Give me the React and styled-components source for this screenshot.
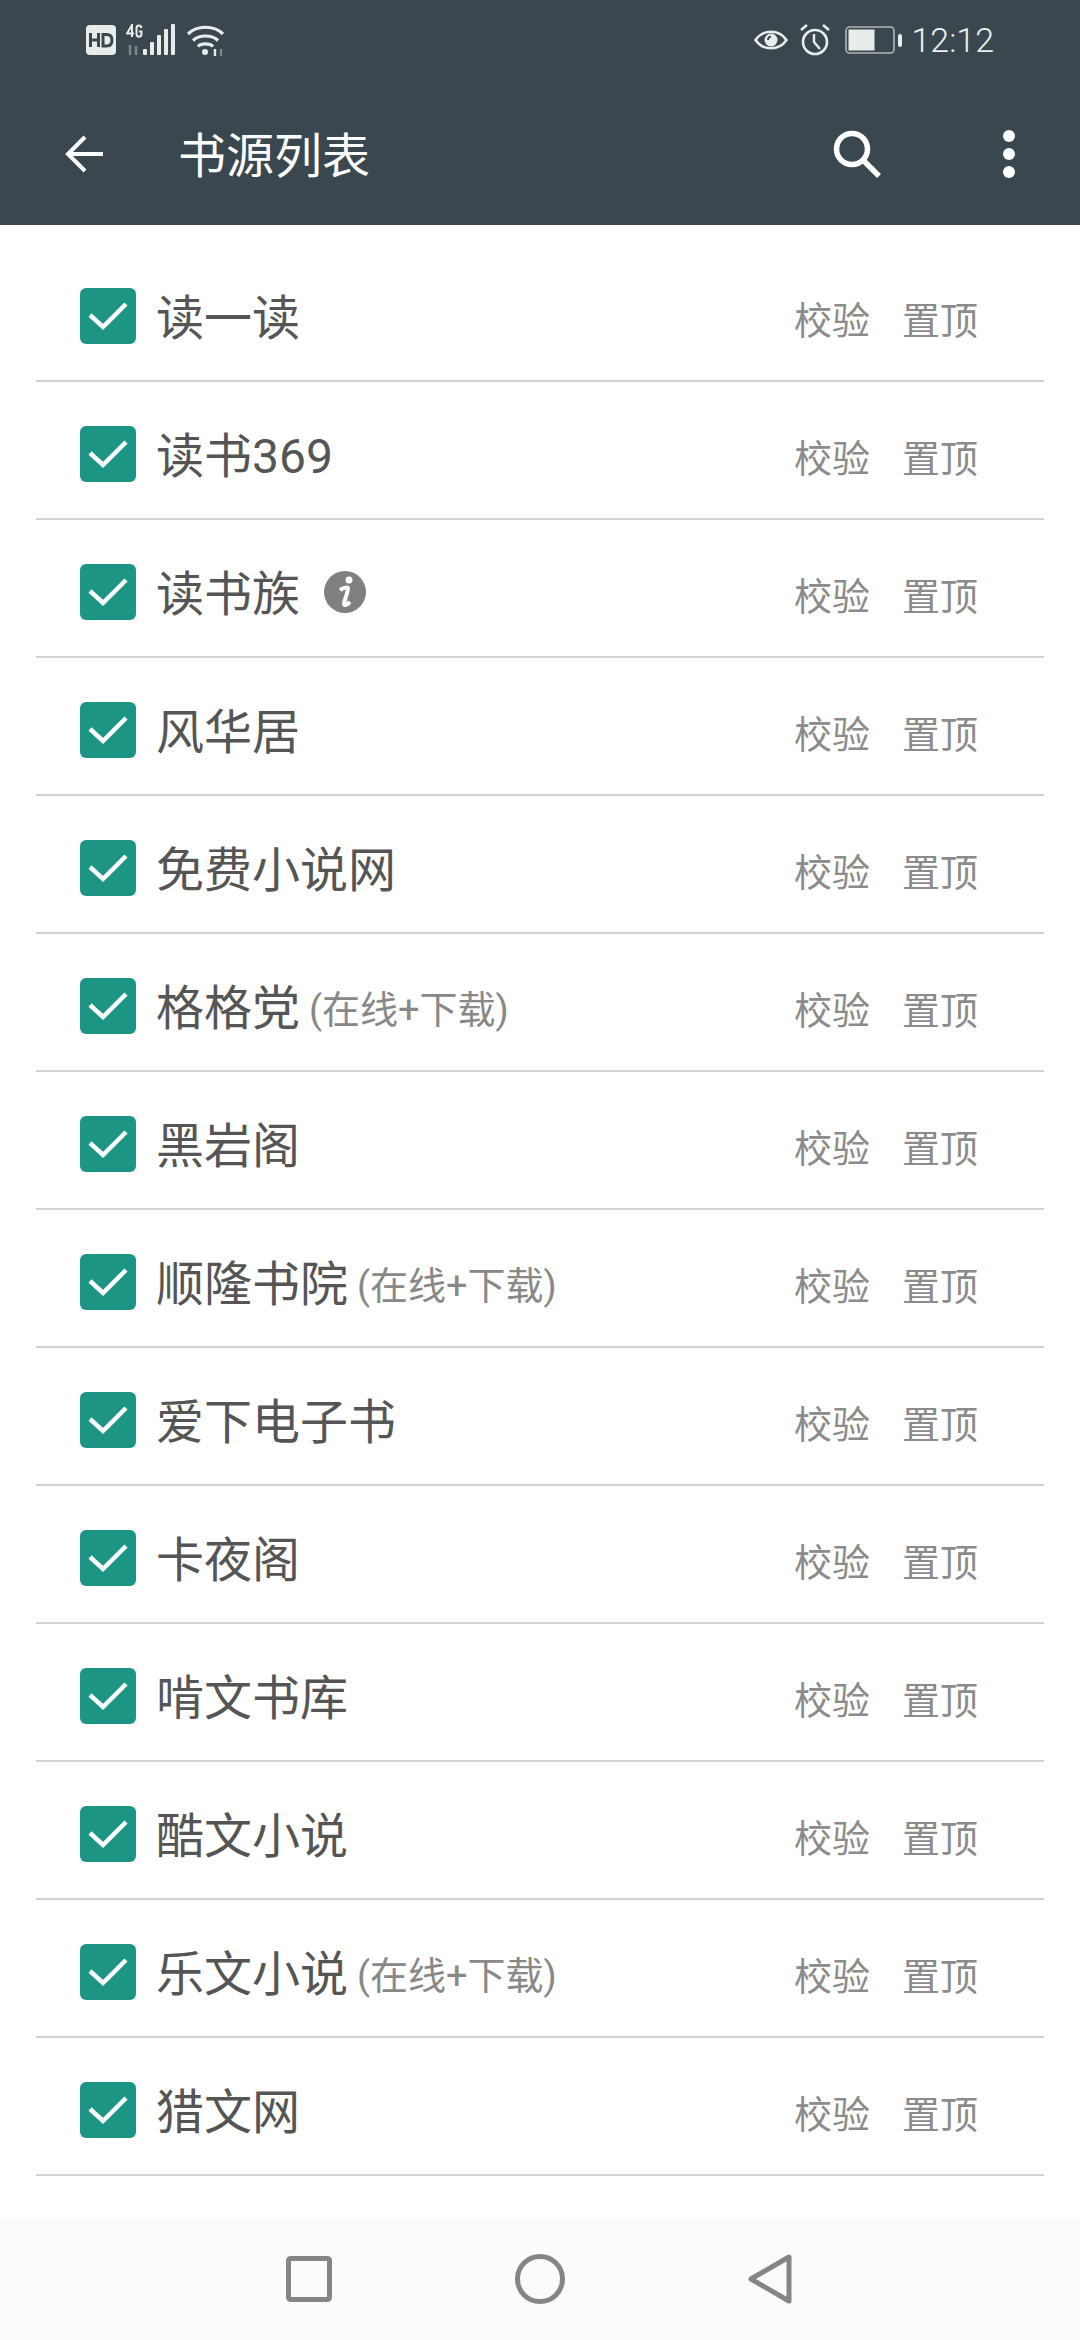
import React from "react";
import styled, { createGlobalStyle } from "styled-components";

const Global = createGlobalStyle`
  html, body { margin: 0; padding: 0; background: #fff; }
  body { font-family: "Roboto", "Noto Sans CJK SC", sans-serif; }
`;

const Page = styled.div`
  width: 1080px;
  height: 2340px;
  display: flex;
  flex-direction: column;
  overflow: hidden;
  background: #fff;
`;

const Header = styled.header`
  height: 225px;
  background: #3a474e;
  color: #fff;
  display: flex;
  flex-direction: column;
`;

const StatusBar = styled.div`
  height: 80px;
  padding: 0 86px 0 86px;
  display: flex;
  align-items: center;
  justify-content: space-between;
  color: #e8edec;
`;

const StatusGroup = styled.div`
  display: flex;
  align-items: center;
  gap: ${(p) => p.$gap}px;
`;

const BatterySlot = styled.span`
  display: flex;
  margin: 0 -3px 0 3px;
`;

const Clock = styled.span`
  font: 300 34px "Roboto", sans-serif;
  color: #eef1f1;
`;

const Toolbar = styled.div`
  flex: 1;
  display: flex;
  align-items: center;
  padding: 3px 65px 0 64px;
`;

const Title = styled.h1`
  flex: 1;
  margin: 0 0 5px 74px;
  font: 400 48px "Roboto", "Noto Sans CJK SC", sans-serif;
  color: #fff;
`;

const ToolIcons = styled.div`
  display: flex;
  align-items: center;
  gap: 122px;
`;

const List = styled.ul`
  flex: 1;
  list-style: none;
  margin: 0;
  padding: 19px 36px 0;
`;

const Row = styled.li`
  height: 138px;
  box-sizing: border-box;
  border-bottom: 2px solid #d2d2d2;
  padding: 8px 66px 0 44px;
  display: flex;
  align-items: center;
`;

const Check = styled.span`
  width: 56px;
  height: 56px;
  border-radius: 6px;
  background: #1c9585;
  display: flex;
  align-items: center;
  justify-content: center;
  flex: none;
`;

const Name = styled.span`
  margin-left: 20px;
  margin-bottom: 5px;
  font: 400 48px "Roboto", "Noto Sans CJK SC", sans-serif;
  color: #555;
  white-space: nowrap;
`;

const Note = styled.span`
  margin-left: 9px;
  font: 400 38px "Roboto", "Noto Sans CJK SC", sans-serif;
  color: #888;
  white-space: nowrap;
`;

const InfoBadge = styled.span`
  display: flex;
  margin-left: 24px;
`;

const Actions = styled.div`
  margin-left: auto;
  margin-top: 2px;
  display: flex;
  gap: 32px;
`;

const Action = styled.span`
  font: 400 38px "Roboto", "Noto Sans CJK SC", sans-serif;
  color: #8b8b8b;
`;

const NavBar = styled.nav`
  height: 122px;
  background: #fbfbfb;
  display: flex;
  align-items: center;
  gap: 183px;
  padding: 0 0 0 286px;
`;

const sources = [
  { name: "读一读" },
  { name: "读书369" },
  { name: "读书族", info: true },
  { name: "风华居" },
  { name: "免费小说网" },
  { name: "格格党", note: "(在线+下载)" },
  { name: "黑岩阁" },
  { name: "顺隆书院", note: "(在线+下载)" },
  { name: "爱下电子书" },
  { name: "卡夜阁" },
  { name: "啃文书库" },
  { name: "酷文小说" },
  { name: "乐文小说", note: "(在线+下载)" },
  { name: "猎文网" },
];

const HdIcon = () => (
  <svg width="30" height="30" viewBox="0 0 30 30">
    <rect width="30" height="30" rx="4" fill="#e8edec" />
    <path d="M4.500 8v14M12.500 8v14M4.500 15h8M17 9.500v11.500h3.500c3.500 0 5.500-2 5.500-5.750s-2-5.750-5.500-5.750z" fill="none" stroke="#3a474e" strokeWidth="3" />
  </svg>
);

const SignalIcon = () => (
  <svg width="50" height="32" viewBox="0 0 50 32">
    <path d="M6 13V1L1 9.500H8" fill="none" stroke="#e8edec" strokeWidth="2" />
    <path d="M15.500 4C15 0.500 10.500 0.500 10.500 4v6c0 3.500 5 3.500 5 0V7.500h-2.500" fill="none" stroke="#e8edec" strokeWidth="2" />
    <path d="M4 21v10M10 22v9" stroke="#7c878b" strokeWidth="2.500" />
    <rect x="17" y="25" width="4" height="6" rx="1" fill="#e8edec" />
    <rect x="24" y="18" width="4" height="13" rx="1" fill="#e8edec" />
    <rect x="31" y="11" width="4" height="20" rx="1" fill="#e8edec" />
    <rect x="38" y="5" width="4" height="26" rx="1" fill="#e8edec" />
    <rect x="45" y="0" width="4" height="31" rx="1" fill="#e8edec" />
  </svg>
);

const WifiIcon = () => (
  <svg width="39" height="32" viewBox="0 0 39 32" fill="none">
    <path d="M2 10C11 1 28 1 37 10" stroke="#e8edec" strokeWidth="3.200" />
    <path d="M7 16.500C13 10.500 26 10.500 32 16.500" stroke="#e8edec" strokeWidth="3.200" />
    <path d="M12 22.500C15 19 24 19 27 22.500" stroke="#e8edec" strokeWidth="3.200" />
    <circle cx="19" cy="28" r="3" fill="#e8edec" />
    <path d="M29 25v7" stroke="#e8edec" strokeWidth="2.400" />
    <path d="M35 25v7" stroke="#7c878b" strokeWidth="2.400" />
  </svg>
);

const EyeIcon = () => (
  <svg width="34" height="26" viewBox="0 0 34 26" fill="none">
    <path d="M1.500 13C9 2 25 2 32.500 13C25 24 9 24 1.500 13Z" stroke="#e8edec" strokeWidth="2.500" />
    <circle cx="17" cy="13" r="6.500" fill="#e8edec" />
    <path d="M14 13a3.500 3.500 0 0 1 3-3.500" stroke="#3a474e" strokeWidth="1.800" />
  </svg>
);

const AlarmIcon = () => (
  <svg width="32" height="32" viewBox="0 0 32 32" fill="none" stroke="#e8edec">
    <circle cx="16" cy="18" r="12" strokeWidth="2.600" />
    <path d="M15 10v8l6 7" strokeWidth="2.400" />
    <path d="M2 6l6-5M30 6l-6-5" strokeWidth="2.600" />
  </svg>
);

const BatteryIcon = () => (
  <svg width="58" height="30" viewBox="0 0 58 30" fill="none">
    <rect x="1" y="2" width="48" height="26" rx="3.500" stroke="#aeb7b8" strokeWidth="1.600" />
    <rect x="3.500" y="4.500" width="26" height="21" fill="#e8edec" />
    <rect x="53" y="9" width="4" height="13" rx="2" fill="#e8edec" />
  </svg>
);

const BackIcon = () => (
  <svg width="40" height="40" viewBox="0 0 40 40" fill="none" stroke="#fff" strokeWidth="4">
    <path d="M39 20H4M21 3 4 20l17 17" />
  </svg>
);

const SearchIcon = () => (
  <svg width="48" height="48" viewBox="0 0 48 48" fill="none" stroke="#fff" strokeWidth="5.500">
    <circle cx="19" cy="19" r="15.500" />
    <path d="M30 30l16 16" />
  </svg>
);

const MoreIcon = () => (
  <svg width="12" height="48" viewBox="0 0 12 48" fill="#fff">
    <circle cx="6" cy="6" r="6" />
    <circle cx="6" cy="24" r="6" />
    <circle cx="6" cy="42" r="6" />
  </svg>
);

const CheckMark = () => (
  <svg width="40" height="30" viewBox="0 0 40 30" fill="none" stroke="#fff" strokeWidth="4.500">
    <path d="M2 14l13 12L38 3" />
  </svg>
);

const InfoIcon = () => (
  <svg width="42" height="42" viewBox="0 0 42 42">
    <circle cx="21" cy="21" r="21" fill="#808080" />
    <circle cx="25" cy="9" r="3.500" fill="#fff" />
    <path d="M16 19c3-2 7-3 8-2s-4 13-4 16c0 2 3 1 6-2" fill="none" stroke="#fff" strokeWidth="4" />
  </svg>
);

const SquareIcon = () => (
  <svg width="46" height="46" viewBox="0 0 46 46" fill="none" stroke="#858585" strokeWidth="5">
    <rect x="2.500" y="2.500" width="41" height="41" rx="2" />
  </svg>
);

const CircleIcon = () => (
  <svg width="50" height="50" viewBox="0 0 50 50" fill="none" stroke="#858585" strokeWidth="5">
    <circle cx="25" cy="25" r="22.500" />
  </svg>
);

const TriangleIcon = () => (
  <svg width="44" height="50" viewBox="0 0 44 50" fill="none" stroke="#858585" strokeWidth="5" strokeLinejoin="round">
    <path d="M41 3V47L3 25Z" />
  </svg>
);

export default function App() {
  return (
    <Page>
      <Global />
      <Header>
        <StatusBar>
          <StatusGroup $gap={10}>
            <HdIcon />
            <SignalIcon />
            <WifiIcon />
          </StatusGroup>
          <StatusGroup $gap={11}>
            <EyeIcon />
            <AlarmIcon />
            <BatterySlot>
              <BatteryIcon />
            </BatterySlot>
            <Clock>12:12</Clock>
          </StatusGroup>
        </StatusBar>
        <Toolbar>
          <BackIcon />
          <Title>书源列表</Title>
          <ToolIcons>
            <SearchIcon />
            <MoreIcon />
          </ToolIcons>
        </Toolbar>
      </Header>
      <List>
        {sources.map((s) => (
          <Row key={s.name}>
            <Check>
              <CheckMark />
            </Check>
            <Name>{s.name}</Name>
            {s.note && <Note>{s.note}</Note>}
            {s.info && (
              <InfoBadge>
                <InfoIcon />
              </InfoBadge>
            )}
            <Actions>
              <Action>校验</Action>
              <Action>置顶</Action>
            </Actions>
          </Row>
        ))}
      </List>
      <NavBar>
        <SquareIcon />
        <CircleIcon />
        <TriangleIcon />
      </NavBar>
    </Page>
  );
}
